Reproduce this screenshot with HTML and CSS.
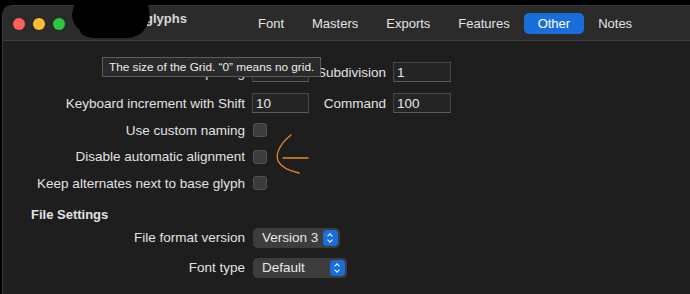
FILE: index.html
```html
<!DOCTYPE html>
<html lang="en">
<head>
    <meta charset="UTF-8">
    <title>Font Info</title>
    <link rel="stylesheet" href="styles.css">
</head>
<body>

    <div class="window">
        <!-- title bar with tabs -->
        <div class="titlebar">
            <div class="lights">
                <span class="light red"></span>
                <span class="light yellow"></span>
                <span class="light green"></span>
            </div>
            <div class="title">glyphs</div>
            <div class="tabs">
                <span class="tab">Font</span>
                <span class="tab">Masters</span>
                <span class="tab">Exports</span>
                <span class="tab">Features</span>
                <span class="tab active">Other</span>
                <span class="tab">Notes</span>
            </div>
        </div>

        <!-- settings -->
        <div class="content">
            <div class="row">
                <span class="label">Grid spacing</span>
                <input class="field" type="text" value="">
                <span class="label small">Subdivision</span>
                <input class="field wide" type="text" value="1">
            </div>
            <div class="row">
                <span class="label">Keyboard increment with Shift</span>
                <input class="field" type="text" value="10">
                <span class="label small">Command</span>
                <input class="field wide" type="text" value="100">
            </div>

            <div class="row check-row first-check">
                <span class="label">Use custom naming</span>
                <span class="checkbox"></span>
            </div>
            <div class="row check-row">
                <span class="label">Disable automatic alignment</span>
                <span class="checkbox"></span>
            </div>
            <div class="row check-row">
                <span class="label">Keep alternates next to base glyph</span>
                <span class="checkbox"></span>
            </div>

            <div class="section-title">File Settings</div>

            <div class="row popup-row">
                <span class="label">File format version</span>
                <span class="popup version">Version 3<span class="stepper"></span></span>
            </div>
            <div class="row popup-row">
                <span class="label">Font type</span>
                <span class="popup type">Default<span class="stepper"></span></span>
            </div>
        </div>

        <div class="tooltip">The size of the Grid. “0” means no grid.</div>
    </div>

    <!-- redaction and hand-drawn arrow over the screenshot -->
    <svg class="marks" width="690" height="294" viewBox="0 0 690 294">
        <path d="M74 5 L148 5 Q152 18 146 27 Q142 36 128 38 L92 38 Q80 36 80 30 Q72 24 72 14 Z" fill="#000"/>
        <path d="M291 135 C281 143 275 153 278 161 C281 167 290 171 299 173" fill="none" stroke="#e48a2c" stroke-width="1.3" stroke-linecap="round"/>
        <path d="M283 158 L308 158" fill="none" stroke="#e48a2c" stroke-width="1.3" stroke-linecap="round"/>
    </svg>

</body>
</html>
```

FILE: styles.css
```css
body {
    margin: 0;
    background-color: #000;
    font-family: "Liberation Sans", Arial, sans-serif;
    font-size: 13px;
    color: #e2e2e2;
    height: 294px;
    overflow: hidden;
}

.window {
    position: relative;
    margin: 5px 0 0 2px;
    height: 289px;
    background-color: #1e1e1e;
    border-top-left-radius: 10px;
    border-left: 1px solid #3a3a3a;
    border-top: 1px solid #3a3a3a;
    box-sizing: border-box;
    overflow: hidden;
}

.titlebar {
    display: flex;
    align-items: center;
    height: 33px;
    padding: 1px 0 0 10px;
    background-color: #2b2b2b;
    border-bottom: 1px solid #3c3c3c;
    box-sizing: content-box;
}

.lights {
    display: flex;
    gap: 8px;
}

.light {
    width: 12px;
    height: 12px;
    border-radius: 50%;
}

.red { background-color: #fe5f57; }
.yellow { background-color: #febc2e; }
.green { background-color: #28c840; }

.title {
    align-self: flex-start;
    margin: 4px 0 0 80px;
    line-height: 16px;
    font-weight: bold;
    color: #d8d8d8;
    width: 43px;
}

.tabs {
    display: flex;
    margin-left: 56px;
}

.tab {
    padding: 0 14px;
    height: 21px;
    line-height: 21px;
    border-radius: 5px;
    color: #e4e4e4;
}

.tab.active {
    background-color: #1a6edb;
    color: #fff;
}

.content {
    padding-top: 21px;
}

.row {
    display: flex;
    align-items: center;
    height: 20px;
    margin-bottom: 11px;
}

.label {
    width: 242px;
    text-align: right;
    margin-right: 7px;
    white-space: nowrap;
    font-size: 13.5px;
}

.label.small {
    width: 77px;
}

.field {
    width: 57px;
    height: 20px;
    box-sizing: border-box;
    background-color: #252525;
    border: 1px solid #474747;
    border-bottom-color: #5a5a5a;
    color: #e6e6e6;
    font-family: inherit;
    font-size: 13.5px;
    padding: 0 3px;
    margin: 0;
    outline: none;
}

.field.wide {
    width: 58px;
}

.check-row {
    height: 26.5px;
    margin-bottom: 0;
}

.first-check {
    margin-top: -7px;
}

.checkbox {
    width: 14px;
    height: 14px;
    margin-left: 1px;
    box-sizing: border-box;
    border-radius: 3px;
    background-color: #3c3c3c;
    border: 1px solid #525252;
}

.section-title {
    margin: 10px 0 5px 28px;
    line-height: 16px;
    font-weight: bold;
    color: #e2e2e2;
}

.popup-row {
    margin-bottom: 10px;
}

.popup {
    display: flex;
    align-items: center;
    justify-content: space-between;
    height: 20px;
    box-sizing: border-box;
    padding: 0 2px 0 9px;
    margin-left: 1px;
    border-radius: 5px;
    background-color: #3d3d3d;
    color: #e6e6e6;
    font-size: 13.5px;
}

.popup.version { width: 87px; }
.popup.type { width: 94px; }

.stepper {
    position: relative;
    width: 15px;
    height: 16px;
    border-radius: 4px;
    background-color: #1a6edb;
}

.stepper::before,
.stepper::after {
    content: "";
    position: absolute;
    left: 5px;
    width: 3px;
    height: 3px;
    border-left: 1.3px solid #fff;
    border-top: 1.3px solid #fff;
}

.stepper::before {
    top: 4px;
    transform: rotate(45deg);
}

.stepper::after {
    top: 8px;
    transform: rotate(-135deg);
}

.tooltip {
    position: absolute;
    left: 99px;
    top: 51px;
    height: 20px;
    line-height: 18px;
    box-sizing: border-box;
    padding: 0 6px;
    background-color: #2a2a2a;
    border: 1px solid #5c5c5c;
    color: #ececec;
    font-size: 11.8px;
    white-space: nowrap;
}

.marks {
    position: absolute;
    left: 0;
    top: 0;
    pointer-events: none;
}
```
